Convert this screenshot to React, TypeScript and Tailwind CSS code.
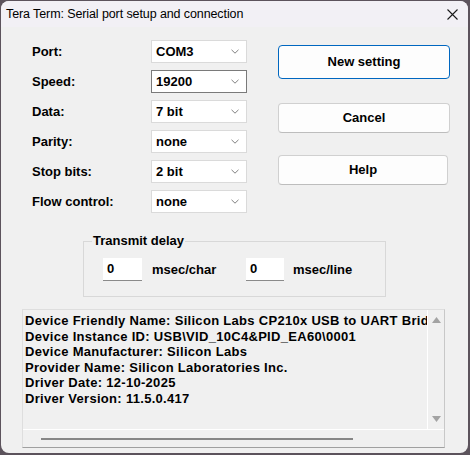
import React from "react";

const rows = [
  { label: "Port:", value: "COM3" },
  { label: "Speed:", value: "19200", focused: true },
  { label: "Data:", value: "7 bit" },
  { label: "Parity:", value: "none" },
  { label: "Stop bits:", value: "2 bit" },
  { label: "Flow control:", value: "none" },
];

const info = [
  "Device Friendly Name: Silicon Labs CP210x USB to UART Bridge (COM3)",
  "Device Instance ID: USB\\VID_10C4&PID_EA60\\0001",
  "Device Manufacturer: Silicon Labs",
  "Provider Name: Silicon Laboratories Inc.",
  "Driver Date: 12-10-2025",
  "Driver Version: 11.5.0.417",
];

function Chevron() {
  return (
    <svg width="8" height="5" viewBox="0 0 8 5" className="shrink-0">
      <polyline points="0.5,0.8 4,4.2 7.5,0.8" fill="none" stroke="#808080" strokeWidth="1" />
    </svg>
  );
}

function Combo({ value, focused }: { value: string; focused?: boolean }) {
  return (
    <div
      className={`flex h-[23px] w-[96px] items-center justify-between bg-white pl-[4px] pr-[7px] border ${
        focused ? "border-[#7a7a7a]" : "border-[#dadada]"
      }`}
    >
      <span>{value}</span>
      <Chevron />
    </div>
  );
}

function Button({ label, primary, h, w }: { label: string; primary?: boolean; h: string; w: string }) {
  return (
    <div
      className={`flex items-center justify-center rounded-[4px] bg-[#fdfdfd] border ${h} ${w} ${
        primary ? "border-[#0067c0]" : "border-[#d0d0d0] border-b-[#bdbdbd]"
      }`}
    >
      {label}
    </div>
  );
}

export default function App() {
  return (
    <div
      className="h-[455px] w-[470px] bg-[#5c535c] pl-[1px] pt-[1px] text-[13px] font-bold text-black"
      style={{ fontFamily: '"Liberation Sans", Arial, sans-serif' }}
    >
      <div className="flex h-[452px] w-[467px] flex-col overflow-hidden rounded-[8px] bg-[#f0f0f0]">
        {/* title bar */}
        <div className="flex h-[26px] shrink-0 items-center justify-between bg-[#f2f0f5] pl-[5px] pr-[10px]">
          <span className="text-[12.5px] font-normal tracking-[-0.1px]">
            Tera Term: Serial port setup and connection
          </span>
          <svg width="11" height="11" viewBox="0 0 11 11">
            <path d="M0.5 0.5 L10.5 10.5 M10.5 0.5 L0.5 10.5" stroke="#1a1a1a" strokeWidth="1.1" />
          </svg>
        </div>

        {/* settings + buttons */}
        <div className="flex pt-[13px]">
          <div className="flex flex-col gap-[7px] pl-[31px]">
            {rows.map((r) => (
              <div key={r.label} className="flex items-center">
                <span className="w-[119px]">{r.label}</span>
                <Combo value={r.value} focused={r.focused} />
              </div>
            ))}
          </div>
          <div className="ml-[31px] flex flex-col pt-[5px]">
            <Button label="New setting" primary h="h-[34px]" w="w-[172px]" />
            <div className="h-[24px]" />
            <Button label="Cancel" h="h-[30px]" w="w-[172px]" />
            <div className="h-[22px]" />
            <Button label="Help" h="h-[30px]" w="w-[170px]" />
          </div>
        </div>

        {/* transmit delay */}
        <div className="relative ml-[82px] mt-[28px] h-[56px] w-[303px] border border-[#d8d8d8]">
          <span className="absolute left-[8px] top-[-9px] bg-[#f0f0f0] px-[1px] leading-[16px]">
            Transmit delay
          </span>
          <div className="flex items-center pl-[19px] pt-[16px]">
            <div className="flex h-[23px] w-[39px] items-center border-b border-[#8a8a8a] bg-white pl-[4px]">0</div>
            <span className="ml-[10px] w-[94px]">msec/char</span>
            <div className="flex h-[23px] w-[38px] items-center border-b border-[#8a8a8a] bg-white pl-[4px]">0</div>
            <span className="ml-[9px]">msec/line</span>
          </div>
        </div>

        {/* device info */}
        <div className="ml-[21px] mt-[12px] flex h-[139px] w-[423px] flex-col border border-[#dedede] border-b-[#a0a0a0] border-r-[#c8c8c8]">
          <div className="flex h-[120px] border-b border-white">
            <div className="w-[405px] overflow-hidden border-r border-white pl-[2px] pt-[3px] leading-[15.6px] tracking-[0.3px]">
              {info.map((l) => (
                <div key={l} className="whitespace-nowrap">
                  {l}
                </div>
              ))}
            </div>
            <div className="flex flex-1 flex-col items-center justify-between py-[7px]">
              <svg width="9" height="6" viewBox="0 0 9 6">
                <polygon points="4.5,0 9,6 0,6" fill="#a3a3a3" />
              </svg>
              <svg width="9" height="6" viewBox="0 0 9 6">
                <polygon points="0,0 9,0 4.5,6" fill="#a3a3a3" />
              </svg>
            </div>
          </div>
          <div className="flex flex-1 items-center pl-[18px]">
            <div className="h-[2px] w-[312px] bg-[#868686]" />
          </div>
        </div>
      </div>
    </div>
  );
}
